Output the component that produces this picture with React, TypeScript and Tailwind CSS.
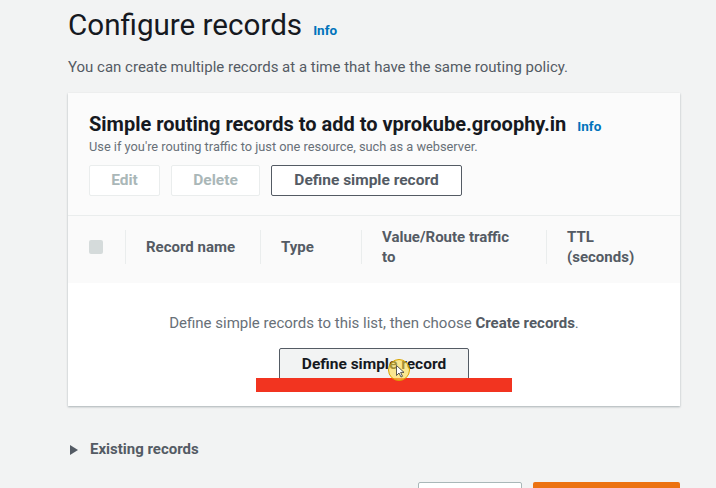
import React from "react"

const font = { fontFamily: "Roboto, 'Liberation Sans', sans-serif" }

const columns = [
  { label: ["Record name"], w: "w-[135px]" },
  { label: ["Type"], w: "w-[101px]" },
  { label: ["Value/Route traffic", "to"], w: "w-[185px]" },
  { label: ["TTL", "(seconds)"], w: "flex-1" },
]

export default function App() {
  return (
    <main className="relative h-[488px] w-[716px] overflow-hidden bg-[#f2f3f3]" style={font}>
      <div className="pl-[68px] pt-[7px]">
        <div className="flex items-baseline gap-[11px]">
          <h1 className="text-[29.6px] leading-[36px] text-[#16191f]">Configure records</h1>
          <span className="text-[13.5px] font-bold text-[#0073bb]">Info</span>
        </div>
        <p className="mt-[14px] text-[15px] leading-[20px] text-[#545b64]">
          You can create multiple records at a time that have the same routing policy.
        </p>

        <div className="mt-[16px] w-[612px] bg-white shadow-[0_1px_2px_rgba(0,28,36,0.3)]">
          <div className="bg-[#fbfbfb] px-[21px] pt-[19px] pb-[19px]">
            <div className="flex items-baseline gap-[11px]">
              <h2 className="text-[20px] font-bold leading-[24px] text-[#16191f]">
                Simple routing records to add to vprokube.groophy.in
              </h2>
              <span className="text-[13.5px] font-bold text-[#0073bb]">Info</span>
            </div>
            <p className="mt-[3px] text-[12.8px] leading-[16px] text-[#687078]">
              Use if you're routing traffic to just one resource, such as a webserver.
            </p>
            <div className="mt-[10px] flex gap-[11px]">
              <button className="h-[31px] w-[71px] rounded-[2px] border border-[#eaeded] bg-white text-[15.5px] font-bold text-[#aab7b8]">
                Edit
              </button>
              <button className="h-[31px] w-[89px] rounded-[2px] border border-[#eaeded] bg-white text-[15.5px] font-bold text-[#aab7b8]">
                Delete
              </button>
              <button className="h-[31px] w-[191px] rounded-[2px] border border-[#545b64] bg-white text-[15.5px] font-bold text-[#545b64]">
                Define simple record
              </button>
            </div>
          </div>

          <div className="flex h-[68px] items-center border-t border-[#eaeded] bg-[#fafafa] pb-[6px]">
            <div className="flex h-[34px] w-[57px] items-center pl-[21px]">
              <div className="h-[14px] w-[14px] rounded-[2px] bg-[#d5dbdb]" />
            </div>
            {columns.map((c) => (
              <div key={c.label[0]} className={`flex h-[34px] items-center border-l border-[#eaeded] pl-[20px] ${c.w}`}>
                <div className="text-[15px] font-bold leading-[20px] text-[#545b64]">
                  {c.label.map((l) => (
                    <div key={l}>{l}</div>
                  ))}
                </div>
              </div>
            ))}
          </div>

          <div className="flex h-[123px] flex-col items-center bg-white pt-[30px]">
            <p className="text-[15px] leading-[20px] text-[#687078]">
              Define simple records to this list, then choose <span className="font-bold text-[#545b64]">Create records</span>.
            </p>
            <button className="mt-[15px] h-[33px] w-[190px] rounded-[2px] border border-[#545b64] bg-[#f2f3f3] text-[15.5px] font-bold text-[#16191f]">
              Define simple record
            </button>
          </div>
        </div>

        <div className="mt-[32px] flex items-center gap-[12px] pl-[2px]">
          <svg width="8" height="10" viewBox="0 0 8 10">
            <path d="M0 0 L8 5 L0 10 Z" fill="#545b64" />
          </svg>
          <span className="text-[15px] font-bold text-[#545b64]">Existing records</span>
        </div>

        <div className="mt-[21px] flex justify-end gap-[11px] pr-[36px]">
          <button className="h-[31px] w-[104px] rounded-[2px] border border-[#aab7b8] bg-white" />
          <button className="h-[31px] w-[147px] rounded-[2px] bg-[#ec7211]" />
        </div>
      </div>

      <div className="absolute left-[256px] top-[378px] h-[14px] w-[256px] bg-[#f23420]" />
      <div className="absolute left-[388px] top-[359px] h-[22px] w-[22px] rounded-full border border-[#d9a400] bg-[#ffe04d]/60" />
      <svg className="absolute left-[396px] top-[365px]" width="9" height="13" viewBox="0 0 9 13">
        <path d="M0.5 0.5 L0.5 10.5 L3 8 L5 12 L6.5 11.3 L4.6 7.4 L8 7.4 Z" fill="#ffffff" stroke="#333" strokeWidth="0.8" />
      </svg>
    </main>
  )
}
